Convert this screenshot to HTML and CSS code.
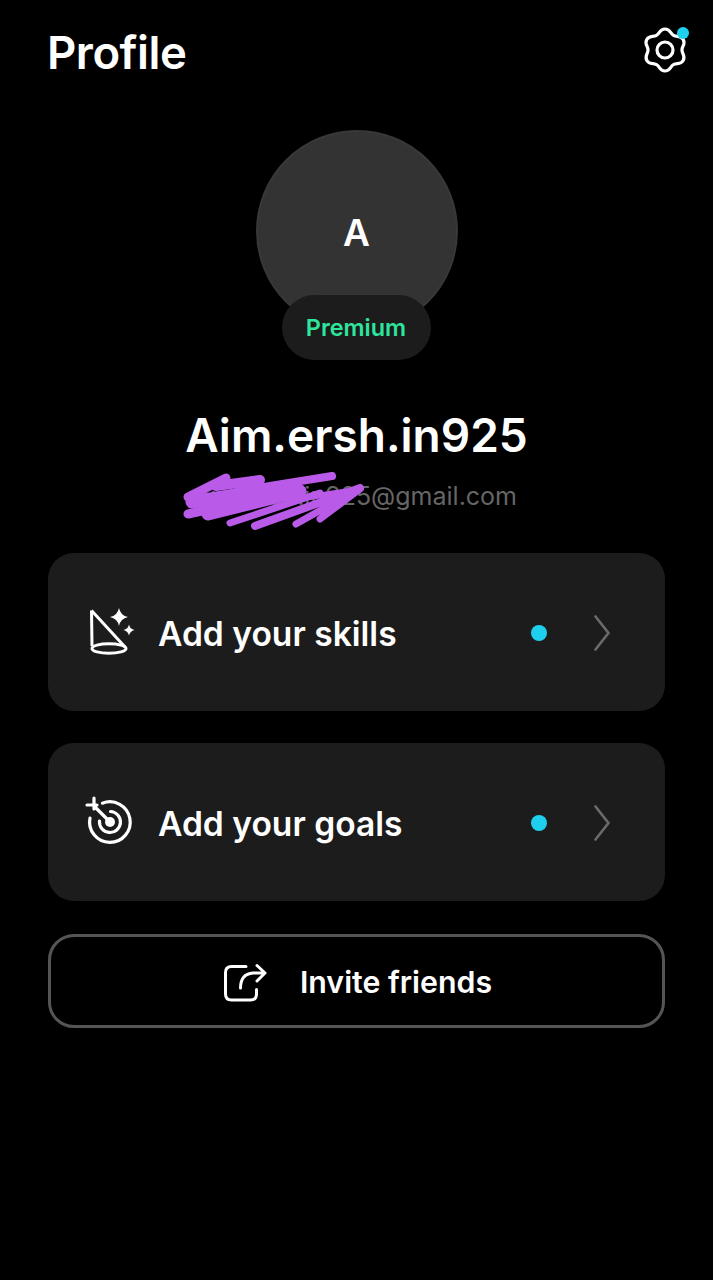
FILE: index.html
```html
<!DOCTYPE html>
<html lang="en">
<head>
    <meta charset="UTF-8">
    <meta name="viewport" content="width=device-width, initial-scale=1.0">
    <title>Profile</title>
    <link rel="stylesheet" href="styles.css">
</head>
<body>
    <div class="page">
        <header class="top-bar">
            <h1>Profile</h1>
            <div class="settings">
                <svg class="gear" width="50" height="50" viewBox="-25 -25 50 50" fill="none" stroke="#fff" stroke-width="3.2">
                    <path d="M0 -21C5.5 -21 5 -16.5 8.5 -14.7C11.79 -12.58 15.44 -15.26 18.19 -10.5C20.94 -5.74 16.79 -3.92 17 0C16.79 3.92 20.94 5.74 18.19 10.5C15.44 15.26 11.79 12.58 8.5 14.7C5 16.5 5.5 21 0 21C-5.5 21 -5 16.5 -8.5 14.7C-11.79 12.58 -15.44 15.26 -18.19 10.5C-20.94 5.74 -16.79 3.92 -17 0C-16.79 -3.92 -20.94 -5.74 -18.19 -10.5C-15.44 -15.26 -11.79 -12.58 -8.5 -14.7C-5 -16.5 -5.5 -21 0 -21Z"/>
                    <circle r="8"/>
                </svg>
                <span class="settings-dot"></span>
            </div>
        </header>

        <section class="profile">
            <div class="avatar-wrap">
                <div class="avatar">A</div>
                <span class="badge">Premium</span>
            </div>
            <h2 class="name">Aim.ersh.in925</h2>
            <div class="email-wrap">
                <span class="email">aim.ersh.in925@gmail.com</span>
                <svg class="scribble" width="200" height="75" viewBox="0 0 200 75" fill="none" stroke="#b95be8" stroke-width="8" stroke-linecap="round">
                    <path d="M20 37L58 18" stroke-width="9"/>
                    <path d="M48 26L92 20" stroke-width="10"/>
                    <path d="M24 42L122 26" stroke-width="13"/>
                    <path d="M70 31L164 16"/>
                    <path d="M20 54L66 44" stroke-width="9"/>
                    <path d="M40 54L132 31" stroke-width="13"/>
                    <path d="M62 63L152 33" stroke-width="7"/>
                    <path d="M87 66L192 28"/>
                    <path d="M128 64L192 28M152 59L192 29" stroke-width="7"/>
                    <path d="M122 40L188 30" stroke-width="6"/>
                </svg>
            </div>
        </section>

        <a class="row-card">
            <svg class="row-icon" width="46" height="50" viewBox="0 0 46 50" fill="none" stroke="#fff" stroke-width="3" stroke-linejoin="round">
                <path d="M2.5 2.5L3 38M2.5 2.5L36 39"/>
                <ellipse cx="20" cy="40.5" rx="17" ry="4.8"/>
                <path d="M30 0Q31.5 7.5 39 9Q31.5 10.5 30 18Q28.5 10.5 21 9Q28.5 7.5 30 0Z" fill="#fff" stroke="none"/>
                <path d="M40 16.5Q41 21 45.5 22Q41 23 40 27.5Q39 23 34.5 22Q39 21 40 16.5Z" fill="#fff" stroke="none"/>
            </svg>
            <span class="row-label">Add your skills</span>
            <span class="row-dot"></span>
            <svg class="chevron" width="16" height="36" viewBox="0 0 16 36" fill="none" stroke="#6b6b6b" stroke-width="2.6" stroke-linecap="round" stroke-linejoin="round">
                <path d="M1.5 1.5L14.5 18L1.5 34.5"/>
            </svg>
        </a>

        <a class="row-card">
            <svg class="row-icon" width="46" height="50" viewBox="0 0 46 50" fill="none" stroke="#fff" stroke-width="3.2" stroke-linecap="round">
                <path d="M13.4 5.2A20.3 20.3 0 1 1 1 20"/>
                <path d="M21.5 13.5A10.5 10.5 0 1 1 10.5 23"/>
                <circle cx="21" cy="24" r="5" fill="#fff" stroke="none"/>
                <path d="M5 8L21 24M-2 7H8M5 0V11"/>
            </svg>
            <span class="row-label">Add your goals</span>
            <span class="row-dot"></span>
            <svg class="chevron" width="16" height="36" viewBox="0 0 16 36" fill="none" stroke="#6b6b6b" stroke-width="2.6" stroke-linecap="round" stroke-linejoin="round">
                <path d="M1.5 1.5L14.5 18L1.5 34.5"/>
            </svg>
        </a>

        <a class="invite">
            <svg width="46" height="42" viewBox="0 0 46 42" fill="none" stroke="#fff" stroke-width="3" stroke-linecap="round" stroke-linejoin="round">
                <path d="M25 5.5H10.5Q4.5 5.5 4.5 11.5V33Q4.5 39 10.5 39H29.5Q35.5 39 35.5 33V28.5"/>
                <path d="M36 4.5L44 12L36 20M44 12H32Q19.5 13 19.5 27"/>
            </svg>
            <span>Invite friends</span>
        </a>
    </div>
</body>
</html>
```

FILE: styles.css
```css
* {
    box-sizing: border-box;
}
body {
    margin: 0;
    background: #000;
    color: #fff;
    font-family: 'Inter', sans-serif;
}
.page {
    padding: 0 48px;
    min-height: 100vh;
}
.top-bar {
    display: flex;
    justify-content: space-between;
    align-items: center;
    height: 104px;
}
h1 {
    margin: 0 0 0 -1px;
    font-size: 45.5px;
    font-weight: 600;
    letter-spacing: -0.5px;
}
.settings {
    position: relative;
    margin-right: -25px;
    width: 50px;
    height: 50px;
    margin-top: -4px;
}
.gear {
    display: block;
}
.settings-dot {
    position: absolute;
    top: 2px;
    right: 1px;
    width: 12px;
    height: 12px;
    border-radius: 50%;
    background: #1fd0ee;
}
.profile {
    display: flex;
    flex-direction: column;
    align-items: center;
    padding-top: 26px;
}
.avatar-wrap {
    position: relative;
    width: 202px;
    height: 230px;
}
.avatar {
    width: 202px;
    height: 202px;
    padding-top: 2px;
    border-radius: 50%;
    background: #333;
    border: 2px solid #383838;
    display: flex;
    align-items: center;
    justify-content: center;
    font-size: 37px;
    font-weight: 600;
}
.badge {
    position: absolute;
    left: 26px;
    top: 165px;
    width: 149px;
    height: 65px;
    border-radius: 33px;
    background: #1c1c1c;
    color: #2ee59d;
    display: flex;
    align-items: center;
    justify-content: center;
    font-size: 23.4px;
    font-weight: 600;
}
.name {
    margin: 47px 0 0;
    font-size: 46px;
    line-height: 56px;
    font-weight: 600;
}
.email-wrap {
    position: relative;
    margin-top: 17px;
    line-height: 32px;
}
.email {
    font-size: 25px;
    color: #666;
}
.scribble {
    position: absolute;
    left: -28px;
    top: -20px;
}
.row-card {
    display: flex;
    align-items: center;
    height: 158px;
    margin-top: 32px;
    padding: 2px 55px 0 41px;
    background: #1c1c1c;
    border-radius: 26px;
}
.profile + .row-card {
    margin-top: 38px;
}
.row-icon {
    flex: none;
    overflow: visible;
}
.row-label {
    flex: 1;
    margin-left: 23px;
    font-size: 33.6px;
    font-weight: 600;
}
.row-dot {
    width: 16px;
    height: 16px;
    border-radius: 50%;
    background: #1fd0ee;
    margin-right: 47px;
}
.invite {
    display: flex;
    align-items: center;
    justify-content: center;
    gap: 33px;
    height: 94px;
    margin-top: 33px;
    padding-top: 1px;
    border: 3px solid #555;
    border-radius: 26px;
    font-size: 30.3px;
    font-weight: 600;
}
```
